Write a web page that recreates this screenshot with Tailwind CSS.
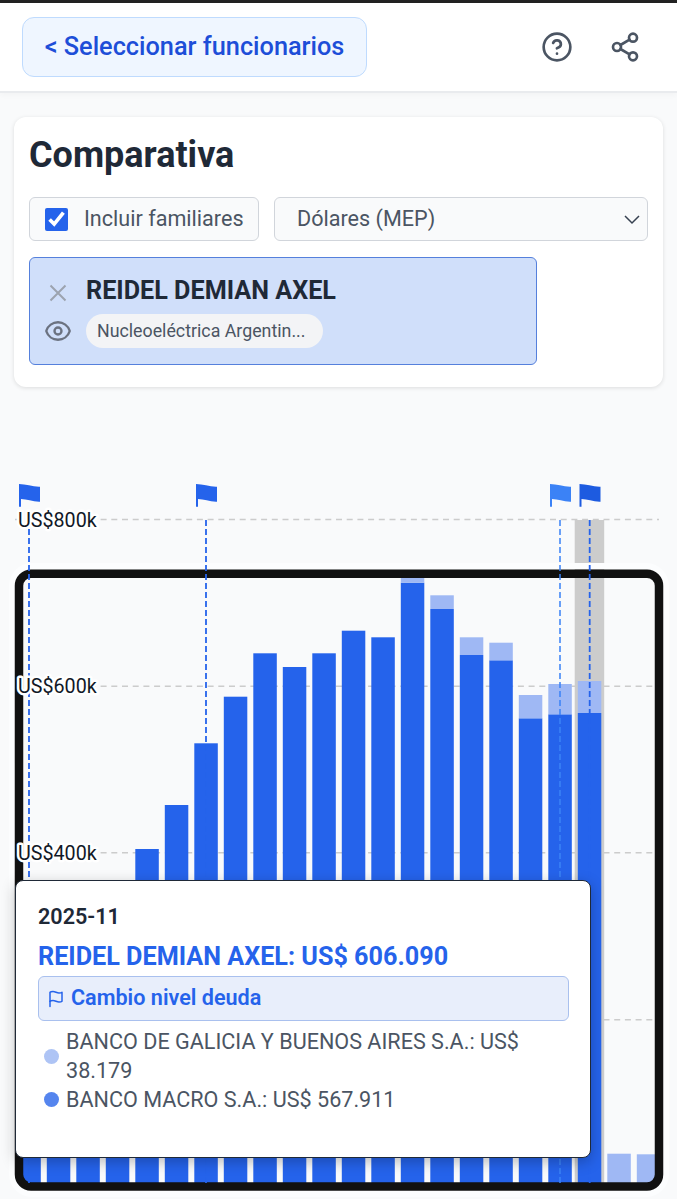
<!DOCTYPE html>
<html lang="es">
<head>
<meta charset="utf-8">
<script src="https://cdn.jsdelivr.net/npm/@tailwindcss/browser@4"></script>
</head>
<body class="m-0 h-[1199px] w-[677px] overflow-hidden bg-[#f9fafb] font-['Roboto',sans-serif]">
  <div class="h-[3px] bg-[#222]"></div>
  <header class="flex h-[90px] items-center justify-between border-b-2 border-[#e9ebee] bg-white pl-[22px] pr-[36px] shadow-[0_2px_6px_rgba(0,0,0,0.03)]">
    <button class="flex h-[60px] w-[345px] items-center justify-center rounded-xl border border-[#bfdbfe] bg-[#eff6ff] text-[25.300px] font-medium text-[#1d4ed8]">&lt; Seleccionar funcionarios</button>
    <div class="flex items-center gap-[36px]">
      <svg class="h-8 w-8 text-[#4b5563]" viewBox="0 0 24 24" fill="none" stroke="currentColor" stroke-width="2" stroke-linecap="round" stroke-linejoin="round"><circle cx="12" cy="12" r="10"/><path d="M9.090 9a3 3 0 0 1 5.830 1c0 2-3 3-3 3"/><path d="M12 17h.010"/></svg>
      <svg class="h-8 w-8 text-[#4b5563]" viewBox="0 0 24 24" fill="none" stroke="currentColor" stroke-width="2" stroke-linecap="round" stroke-linejoin="round"><circle cx="18" cy="5" r="3"/><circle cx="6" cy="12" r="3"/><circle cx="18" cy="19" r="3"/><path d="M8.590 13.510l6.830 3.980"/><path d="M15.410 6.510l-6.820 3.980"/></svg>
    </div>
  </header>

  <section class="mx-[14px] mt-6 h-[270px] w-[649px] rounded-xl bg-white px-[15px] pt-[15px] shadow-[0_1px_4px_rgba(0,0,0,0.12)]">
    <h1 class="text-[36px] font-bold leading-[46px] text-[#1f2937]">Comparativa</h1>
    <div class="mt-[19px] flex gap-[15px]">
      <label class="flex h-[44px] w-[230px] items-center gap-[16px] rounded-md border border-[#d1d5db] bg-[#f9fafb] pl-[15px] text-[21.600px] text-[#4b5563]">
        <input type="checkbox" checked class="h-[23px] w-[23px] accent-[#2563eb]">
        <span>Incluir familiares</span>
      </label>
      <div class="flex h-[44px] w-[374px] items-center justify-between rounded-md border border-[#d1d5db] bg-[#f9fafb] pl-[22px] pr-[6px] text-[21.600px] text-[#4b5563]">
        <span>Dólares (MEP)</span>
        <svg class="h-[18px] w-[18px] text-[#374151]" viewBox="0 0 18 18" fill="none" stroke="currentColor" stroke-width="1.500"><path d="M2 6l7 7 7-7"/></svg>
      </div>
    </div>
    <div class="mt-[16px] flex h-[108px] w-[507.500px] gap-[14px] rounded-md border-[1.500px] border-[#5580dc] bg-[#d0dffa] pl-[14px] pt-[16px]">
      <div class="flex w-[28px] flex-col items-center pt-[9px]">
        <svg class="h-[20px] w-[20px] text-[#9ca3af]" viewBox="0 0 20 20" fill="none" stroke="currentColor" stroke-width="2"><path d="M2.500 2.500l15 15M17.500 2.500l-15 15"/></svg>
        <svg class="mt-[14px] h-[28px] w-[28px] text-[#6b7280]" viewBox="0 0 24 24" fill="none" stroke="currentColor" stroke-width="2" stroke-linecap="round" stroke-linejoin="round"><path d="M2.036 12.322a1.012 1.012 0 0 1 0-.639C3.423 7.51 7.36 4.5 12 4.5c4.638 0 8.573 3.007 9.963 7.178.07.207.07.431 0 .639C20.577 16.49 16.64 19.5 12 19.5c-4.638 0-8.573-3.007-9.963-7.178Z"/><path d="M15 12a3 3 0 1 1-6 0 3 3 0 0 1 6 0Z"/></svg>
      </div>
      <div class="flex flex-col items-start">
        <div class="mt-[1px] text-[25.200px] font-bold leading-[32px] text-[#1f2937]">REIDEL DEMIAN AXEL</div>
        <div class="mt-[7px] flex h-[34px] w-[237px] items-center rounded-full bg-[#f3f4f6] pl-[11px] text-[17.800px] text-[#4b5563]">Nucleoeléctrica Argentin...</div>
      </div>
    </div>
  </section>

  <section class="relative mt-[83px] h-[729px] w-[677px]">
    <svg class="absolute inset-0" width="677" height="729" viewBox="0 470 677 729" style="font-family:Roboto,sans-serif">
      <g stroke="#cccccc" stroke-width="1.5" stroke-dasharray="6 4.700">
        <path d="M15 519.500H659"/><path d="M15 686.300H659"/><path d="M15 852.800H659"/><path d="M15 1019.700H659"/>
      </g>
      <rect x="574.700" y="520" width="29.500" height="664" fill="#cccccc"/>
      <g fill="#2563eb">
        <rect x="17.300" y="900" width="23.500" height="284"/>
        <rect x="46.800" y="900" width="23.500" height="284"/>
        <rect x="76.300" y="900" width="23.500" height="284"/>
        <rect x="105.800" y="890" width="23.500" height="294"/>
        <rect x="135.300" y="849" width="23.500" height="335"/>
        <rect x="164.800" y="805" width="23.500" height="379"/>
        <rect x="194.300" y="743.300" width="23.500" height="441"/>
        <rect x="223.800" y="696.700" width="23.500" height="488"/>
        <rect x="253.300" y="653.300" width="23.500" height="531"/>
        <rect x="282.800" y="667" width="23.500" height="517"/>
        <rect x="312.300" y="653.300" width="23.500" height="531"/>
        <rect x="341.800" y="630.700" width="23.500" height="554"/>
        <rect x="371.300" y="637.300" width="23.500" height="547"/>
        <rect x="400.800" y="582.700" width="23.500" height="602"/>
        <rect x="430.300" y="609" width="23.500" height="575"/>
        <rect x="459.800" y="655" width="23.500" height="529"/>
        <rect x="489.300" y="660.300" width="23.500" height="524"/>
        <rect x="518.800" y="718.300" width="23.500" height="466"/>
        <rect x="548.300" y="714.300" width="23.500" height="470"/>
        <rect x="577.800" y="713" width="23.500" height="471"/>
      </g>
      <g fill="#9fb8f4">
        <rect x="400.800" y="570" width="23.500" height="12.700"/>
        <rect x="430.300" y="595.300" width="23.500" height="13.700"/>
        <rect x="459.800" y="637.300" width="23.500" height="17.700"/>
        <rect x="489.300" y="642.700" width="23.500" height="17.600"/>
        <rect x="518.800" y="695" width="23.500" height="23.300"/>
        <rect x="548.300" y="684" width="23.500" height="30.300"/>
        <rect x="577.800" y="681" width="23.500" height="32"/>
        <rect x="607.300" y="1153.700" width="23.500" height="30"/>
        <rect x="636.800" y="1154.300" width="23.500" height="30"/>
      </g>
      <rect x="12" y="566" width="654" height="628" rx="20" fill="none" stroke="#fcfdfe" stroke-width="6"/>
      <rect x="19" y="573.700" width="640" height="612.800" rx="12" fill="none" stroke="#111111" stroke-width="8.500"/>
      <g stroke-width="1.800" stroke-dasharray="6 3" fill="none">
        <path d="M29 520V1186" stroke="#2563eb"/>
        <path d="M206 520V1186" stroke="#2563eb"/>
        <path d="M560 520V1186" stroke="#3b82f6" stroke-opacity="0.85"/>
        <path d="M589.700 520V1186" stroke="#2563eb"/>
      </g>
      <g font-size="19.700" fill="#111827" stroke="#ffffff" stroke-width="5" stroke-linejoin="round" paint-order="stroke">
        <text x="18" y="526.500">US$800k</text>
        <text x="18" y="693">US$600k</text>
        <text x="18" y="859.500">US$400k</text>
      </g>
      <g>
        <path d="M19 484C26 484 33 487 40 486.700V501.700C33 502 27 499 21 499V506.700H19Z" fill="#2563eb"/>
        <path d="M196 484C203 484 210 487 217 486.700V501.700C210 502 204 499 198 499V506.700H196Z" fill="#2563eb"/>
        <path d="M550 484C557 484 564 487 571 486.700V501.700C564 502 558 499 552 499V506.700H550Z" fill="#3b82f6"/>
        <path d="M579.500 484C586.500 484 593.500 487 600.500 486.700V501.700C593.500 502 587.500 499 581.500 499V506.700H579.500Z" fill="#1d5be0"/>
      </g>
    </svg>

    <div class="absolute left-[15px] top-[410px] h-[278px] w-[576px] rounded-lg border border-[#1f2937] bg-white px-[22px] pt-[22px] shadow-[0_4px_14px_rgba(0,0,0,0.25)]">
      <div class="text-[21.600px] font-semibold leading-[28px] text-[#1f2937]">2025-11</div>
      <div class="mt-[10px] text-[25.200px] font-bold leading-[32px] text-[#2563eb]">REIDEL DEMIAN AXEL: US$ 606.090</div>
      <div class="mt-[3px] flex h-[45px] w-[531px] items-center gap-[6px] rounded-md border border-[#a9c0ee] bg-[#e8eefb] pl-[8px] text-[21.600px] font-semibold text-[#2563eb]">
        <svg class="h-[18px] w-[18px]" viewBox="0 0 24 24" fill="none" stroke="currentColor" stroke-width="2" stroke-linecap="round" stroke-linejoin="round"><path d="M4 15s1-1 4-1 5 2 8 2 4-1 4-1V3s-1 1-4 1-5-2-8-2-4 1-4 1z"/><path d="M4 22v-7"/></svg>
        <span>Cambio nivel deuda</span>
      </div>
      <ul class="mt-[6px] flex flex-col text-[21.600px] leading-[29px] text-[#4b5563]">
        <li class="flex items-center gap-[7px] pl-[6px]">
          <span class="h-[15px] w-[15px] shrink-0 rounded-full bg-[#aec4f5]"></span>
          <span class="w-[470px]">BANCO DE GALICIA Y BUENOS AIRES S.A.: US$ 38.179</span>
        </li>
        <li class="flex items-center gap-[7px] pl-[6px]">
          <span class="h-[15px] w-[15px] shrink-0 rounded-full bg-[#5585ee]"></span>
          <span>BANCO MACRO S.A.: US$ 567.911</span>
        </li>
      </ul>
    </div>
  </section>
</body>
</html>
